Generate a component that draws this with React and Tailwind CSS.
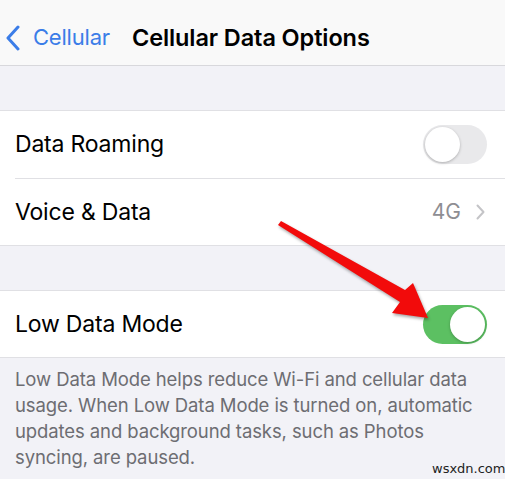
import React from "react";

const Toggle = ({ on }) => (
  <div
    className={`w-[64px] h-[39px] rounded-full p-[2px] flex ${
      on ? "bg-[#5cc062] justify-end" : "bg-[#e9e9eb] justify-start"
    }`}
  >
    <div className="w-[35px] h-[35px] rounded-full bg-white shadow-[0_1px_3px_rgba(0,0,0,0.25)]" />
  </div>
);

export default function App() {
  return (
    <div className="relative w-[505px] h-[479px] overflow-hidden bg-[#f2f2f7] font-['Inter',sans-serif] text-black">
      {/* Nav */}
      <div className="h-[66px] bg-[#f9f9f9] border-b border-[#d8d8dc] flex items-center pt-[10px]">
        <svg width="16" height="26" viewBox="0 0 16 26" className="ml-[5px] mr-[12px]">
          <path d="M13 2 L3 13 L13 24" stroke="#3b7de8" strokeWidth="3" fill="none" strokeLinecap="round" strokeLinejoin="round" />
        </svg>
        <span className="text-[22px] text-[#3b7de8] tracking-[-0.2px]">Cellular</span>
        <span className="ml-[22px] text-[23.5px] font-semibold tracking-[-0.1px]">Cellular Data Options</span>
      </div>

      <div className="h-[44px]" />

      {/* Group 1 */}
      <div className="bg-white border-y border-[#e0e0e4]">
        <div className="h-[67px] flex items-center justify-between pl-[15px] pr-[18px]">
          <span className="text-[23px] tracking-[-0.2px]">Data Roaming</span>
          <Toggle on={false} />
        </div>
        <div className="ml-[15px] h-px bg-[#e0e0e4]" />
        <div className="h-[66px] flex items-center justify-between pl-[15px] pr-[20px]">
          <span className="text-[23px] tracking-[-0.2px]">Voice &amp; Data</span>
          <div className="flex items-center gap-[15px]">
            <span className="text-[21px] text-[#8e8e93]">4G</span>
            <svg width="9" height="16" viewBox="0 0 9 16">
              <path d="M1.5 1.5 L7.5 8 L1.5 14.5" stroke="#c4c4c7" strokeWidth="2" fill="none" strokeLinecap="round" strokeLinejoin="round" />
            </svg>
          </div>
        </div>
      </div>

      <div className="h-[44px]" />

      {/* Group 2 */}
      <div className="bg-white border-y border-[#e0e0e4]">
        <div className="h-[66px] flex items-center justify-between pl-[15px] pr-[18px]">
          <span className="text-[23px] tracking-[-0.2px]">Low Data Mode</span>
          <Toggle on={true} />
        </div>
      </div>

      <p className="pl-[15px] pr-[10px] pt-[8px] text-[18.5px] leading-[26px] text-[#6d6d72] tracking-[-0.1px]">
        Low Data Mode helps reduce Wi-Fi and cellular data usage. When Low Data Mode is turned on, automatic updates and background tasks, such as Photos syncing, are paused.
      </p>

      {/* Arrow overlay */}
      <svg className="absolute left-0 top-0 pointer-events-none" width="505" height="479" viewBox="0 0 505 479">
        <polygon
          points="278,225 281,221 405,290 413,283 428,318 392,313 400,302"
          fill="#f20b0b"
          style={{ filter: "drop-shadow(1px 2px 1.5px rgba(0,0,0,0.35))" }}
        />
      </svg>

      <span className="absolute left-[432px] top-[461px] text-[13px] leading-[15px] text-[#222] font-['DejaVu_Sans',sans-serif]">wsxdn.com</span>
    </div>
  );
}
